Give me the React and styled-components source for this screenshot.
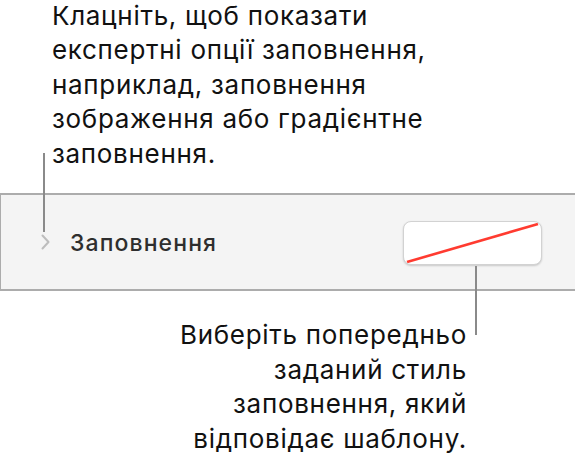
import React from "react";
import styled, { createGlobalStyle } from "styled-components";

const GlobalStyle = createGlobalStyle`
  html, body {
    margin: 0;
    padding: 0;
    background: #ffffff;
  }
  body {
    font-family: Inter, "Noto Sans", "Liberation Sans", sans-serif;
    -webkit-font-smoothing: antialiased;
  }
`;

const Page = styled.div`
  position: relative;
  width: 575px;
  height: 468px;
  overflow: hidden;
  background: #ffffff;
`;

const Note = styled.p`
  margin: 0;
  font-size: 26px;
  line-height: 34.5px;
  color: #111111;
  letter-spacing: 0.7px;
`;

const TopNote = styled(Note)`
  padding-left: 52px;
  margin-top: -1.5px;
`;

const BottomNote = styled(Note)`
  text-align: right;
  padding-right: 108px;
  margin-top: 27px;
`;

const Panel = styled.div`
  display: flex;
  align-items: center;
  height: 94px;
  margin-top: 22px;
  padding: 0 33px 0 40px;
  background: #f4f4f4;
  border-top: 2px solid #acacac;
  border-bottom: 2px solid #acacac;
  border-left: 1px solid #acacac;
`;

const Chevron = styled.svg`
  width: 9px;
  height: 16px;
  flex-shrink: 0;
`;

const Label = styled.span`
  margin-left: 20px;
  margin-top: 2px;
  font-size: 23px;
  font-weight: 500;
  color: #2e2e2e;
  letter-spacing: 1.1px;
`;

const Swatch = styled.div`
  margin-left: auto;
  width: 137px;
  height: 42px;
  margin-top: 2px;
  border-radius: 8px;
  background: #ffffff;
  border: 1px solid #d2d2d2;
  box-shadow: 0 1px 2px rgba(0, 0, 0, 0.18);
  overflow: hidden;
  display: flex;
`;

const Leader = styled.div`
  position: absolute;
  width: 2px;
  background: #8a8a8a;
  left: ${p => p.x}px;
  top: ${p => p.top}px;
  height: ${p => p.h}px;
`;

const NoFill = () => (
  <svg width="137" height="42" viewBox="0 0 137 42">
    <line x1="3" y1="40" x2="134" y2="2" stroke="#ff3b30" strokeWidth="2.6" />
  </svg>
);

export default function App() {
  return (
    <Page>
      <GlobalStyle />
      <TopNote>
        Клацніть, щоб показати
        <br />
        експертні опції заповнення,
        <br />
        наприклад, заповнення
        <br />
        зображення або градієнтне
        <br />
        заповнення.
      </TopNote>
      <Panel>
        <Chevron viewBox="0 0 9 16">
          <path
            d="M1.5 1.5 L7.5 8 L1.5 14.5"
            fill="none"
            stroke="#bdbdbd"
            strokeWidth="2"
            strokeLinecap="round"
            strokeLinejoin="round"
          />
        </Chevron>
        <Label>Заповнення</Label>
        <Swatch>
          <NoFill />
        </Swatch>
      </Panel>
      <BottomNote>
        Виберіть попередньо
        <br />
        заданий стиль
        <br />
        заповнення, який
        <br />
        відповідає шаблону.
      </BottomNote>
      <Leader x={43} top={153} h={79} />
      <Leader x={475} top={266} h={69} />
    </Page>
  );
}
